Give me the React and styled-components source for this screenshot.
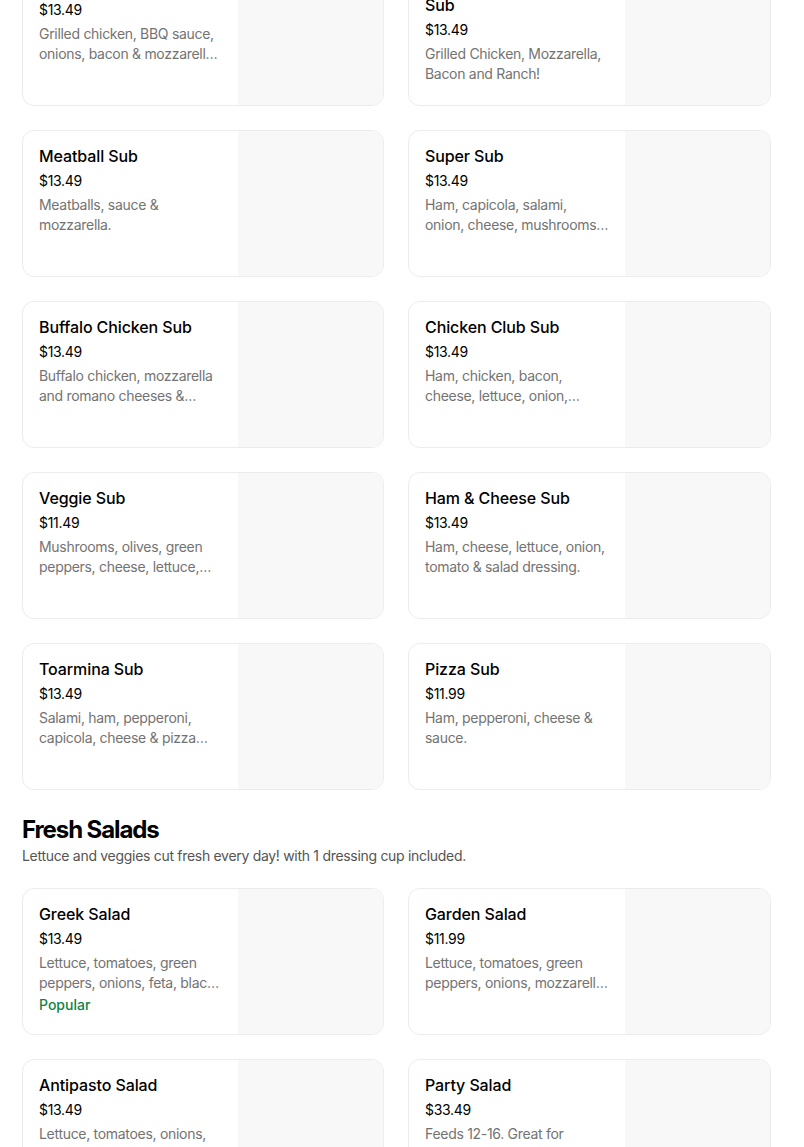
import React from 'react';
import styled, { createGlobalStyle } from 'styled-components';

const GlobalStyle = createGlobalStyle`
  body {
    margin: 0;
    background: #ffffff;
    font-family: Inter, "Liberation Sans", Arial, sans-serif;
    color: #000000;
  }
`;

const subs = [
  {
    name: 'BBQ Chicken Sub',
    price: '$13.49',
    desc: 'Grilled chicken, BBQ sauce, onions, bacon & mozzarella cheese.',
  },
  {
    name: 'Chicken Bacon Ranch Sub',
    price: '$13.49',
    desc: 'Grilled Chicken, Mozzarella, Bacon and Ranch!',
  },
  { name: 'Meatball Sub', price: '$13.49', desc: 'Meatballs, sauce & mozzarella.' },
  {
    name: 'Super Sub',
    price: '$13.49',
    desc: 'Ham, capicola, salami, onion, cheese, mushrooms, lettuce, tomato & salad dressing.',
  },
  {
    name: 'Buffalo Chicken Sub',
    price: '$13.49',
    desc: 'Buffalo chicken, mozzarella and romano cheeses & ranch dressing.',
  },
  {
    name: 'Chicken Club Sub',
    price: '$13.49',
    desc: 'Ham, chicken, bacon, cheese, lettuce, onion, tomato & mayo.',
  },
  {
    name: 'Veggie Sub',
    price: '$11.49',
    desc: 'Mushrooms, olives, green peppers, cheese, lettuce, tomato & onion.',
  },
  {
    name: 'Ham & Cheese Sub',
    price: '$13.49',
    desc: 'Ham, cheese, lettuce, onion, tomato & salad dressing.',
  },
  {
    name: 'Toarmina Sub',
    price: '$13.49',
    desc: 'Salami, ham, pepperoni, capicola, cheese & pizza sauce.',
  },
  { name: 'Pizza Sub', price: '$11.99', desc: 'Ham, pepperoni, cheese & sauce.' },
];

const salads = [
  {
    name: 'Greek Salad',
    price: '$13.49',
    desc: 'Lettuce, tomatoes, green peppers, onions, feta, black olives & pepperoncini.',
    popular: true,
  },
  {
    name: 'Garden Salad',
    price: '$11.99',
    desc: 'Lettuce, tomatoes, green peppers, onions, mozzarella cheese & black olives.',
  },
  {
    name: 'Antipasto Salad',
    price: '$13.49',
    desc: 'Lettuce, tomatoes, onions, ham, salami, capicola & provolone.',
  },
  {
    name: 'Party Salad',
    price: '$33.49',
    desc: 'Feeds 12-16. Great for parties and office lunches.',
  },
];

const MenuItem = ({ item }) => (
  <Card>
    <Info>
      <Title>{item.name}</Title>
      <Price>{item.price}</Price>
      <Desc>{item.desc}</Desc>
      {item.popular && <Badge>Popular</Badge>}
    </Info>
    <Thumb />
  </Card>
);

const App = () => (
  <>
    <GlobalStyle />
    <Page>
      <Grid>
        {subs.map((item) => (
          <MenuItem key={item.name} item={item} />
        ))}
      </Grid>
      <Section>
        <Heading>Fresh Salads</Heading>
        <Subheading>Lettuce and veggies cut fresh every day! with 1 dressing cup included.</Subheading>
      </Section>
      <Grid>
        {salads.map((item) => (
          <MenuItem key={item.name} item={item} />
        ))}
      </Grid>
    </Page>
  </>
);

const Page = styled.main`
  margin-top: -41px;
  padding: 0 0 40px 22px;
  height: 1188px;
  overflow: hidden;
`;

const Grid = styled.div`
  display: grid;
  grid-template-columns: 362px 363px;
  column-gap: 24px;
  row-gap: 24px;
`;

const Card = styled.div`
  display: flex;
  height: 147px;
  border: 1px solid #ececec;
  border-radius: 12px;
  overflow: hidden;
  box-sizing: border-box;
`;

const Info = styled.div`
  flex: 1;
  min-width: 0;
  padding: 15px 16px 0 16px;
`;

const Title = styled.div`
  font-size: 16px;
  line-height: 20px;
  font-weight: 500;
  color: #000000;
  margin-bottom: 5px;
  letter-spacing: -0.1px;
`;

const Price = styled.div`
  font-size: 14px;
  line-height: 20px;
  color: #000000;
  margin-bottom: 4px;
  letter-spacing: -0.3px;
`;

const Desc = styled.div`
  font-size: 14px;
  line-height: 20px;
  color: #737373;
  letter-spacing: -0.3px;
  display: -webkit-box;
  -webkit-line-clamp: 2;
  -webkit-box-orient: vertical;
  overflow: hidden;
`;

const Badge = styled.div`
  font-size: 14px;
  line-height: 20px;
  font-weight: 500;
  color: #0e8345;
  margin-top: 2px;
`;

const Thumb = styled.div`
  width: 145px;
  flex-shrink: 0;
  background: #f8f8f8;
`;

const Section = styled.div`
  padding: 24px 0 22px;
`;

const Heading = styled.h2`
  margin: 0;
  font-size: 24px;
  line-height: 32px;
  font-weight: 700;
  letter-spacing: -1.1px;
`;

const Subheading = styled.p`
  margin: 0;
  font-size: 14px;
  line-height: 20px;
  color: #545454;
  letter-spacing: -0.3px;
`;

export default App;
